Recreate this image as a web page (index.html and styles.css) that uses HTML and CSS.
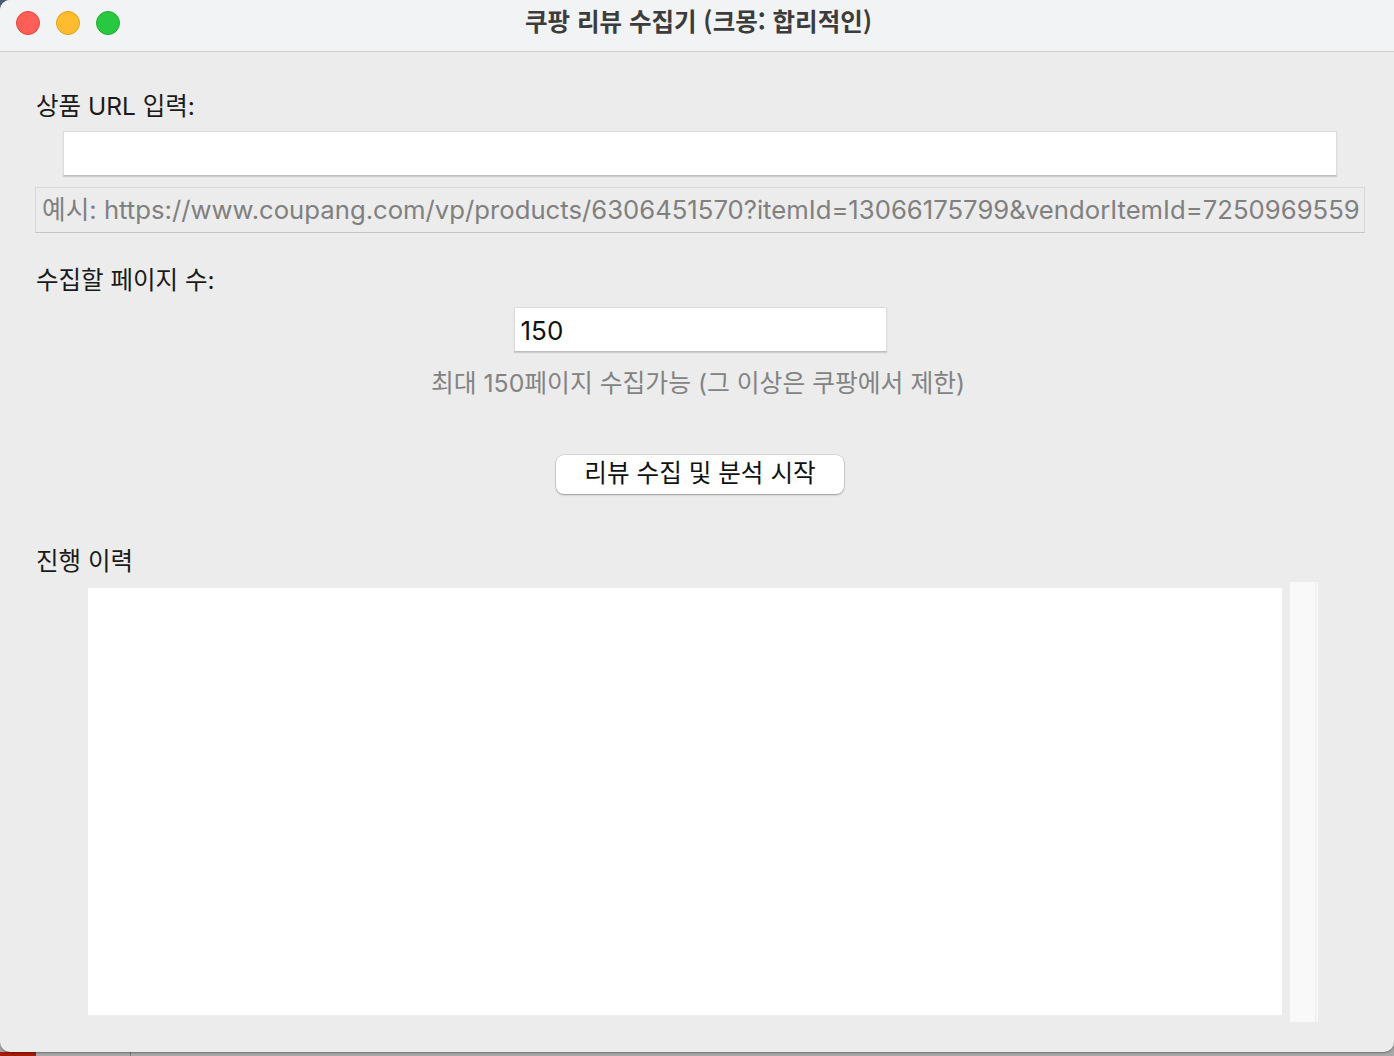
FILE: index.html
```html
<!DOCTYPE html>
<html lang="ko">
<head>
<meta charset="utf-8">
<title>쿠팡 리뷰 수집기</title>
<link rel="stylesheet" href="styles.css">
</head>
<body>
<div class="window">
  <div class="titlebar">
    <div class="lights">
      <span class="light red"></span>
      <span class="light yellow"></span>
      <span class="light green"></span>
    </div>
    <div class="title">쿠팡 리뷰 수집기 (크몽: 합리적인)</div>
  </div>
  <div class="content">
    <div class="label">상품 URL 입력:</div>
    <div class="url-input"></div>
    <div class="example">예시: https://www.coupang.com/vp/products/6306451570?itemId=13066175799&amp;vendorItemId=7250969559</div>
    <div class="label label-pages">수집할 페이지 수:</div>
    <div class="center-row"><div class="pages-input">150</div></div>
    <div class="hint">최대 150페이지 수집가능 (그 이상은 쿠팡에서 제한)</div>
    <div class="center-row"><div class="button">리뷰 수집 및 분석 시작</div></div>
    <div class="label label-log">진행 이력</div>
    <div class="log-row">
      <div class="log"></div>
      <div class="scrollbar"></div>
      <div class="scroll-edge"></div>
    </div>
  </div>
</div>
<div class="desktop-strip">
  <span class="strip-red"></span>
  <span class="strip-gray"></span>
  <span class="strip-rest"></span>
</div>
</body>
</html>
```

FILE: styles.css
```css
html, body {
  margin: 0;
  padding: 0;
}
body {
  width: 1394px;
  height: 1056px;
  overflow: hidden;
  background: linear-gradient(to bottom, #4d5c72 0, #4d5c72 30px, #a6a6a6 30px);
  font-family: "Inter", "Noto Sans CJK KR", sans-serif;
}
.window {
  height: 1052px;
  background: #ececec;
  border-radius: 10px 0 10px 10px;
  overflow: hidden;
  display: flex;
  flex-direction: column;
  box-shadow: 0 1px 2px rgba(0,0,0,0.35);
  position: relative;
  z-index: 1;
}
.titlebar {
  height: 52px;
  flex: none;
  background: #f2f3f5;
  border-bottom: 1px solid #cbcbcb;
  box-sizing: border-box;
  display: flex;
  align-items: center;
  position: relative;
}
.lights {
  display: flex;
  gap: 16px;
  padding-left: 16px;
  padding-bottom: 6px;
}
.light {
  width: 24px;
  height: 24px;
  border-radius: 50%;
  box-sizing: border-box;
}
.red { background: #ff5f57; border: 1px solid #e2463f; }
.yellow { background: #febc2e; border: 1px solid #e1a116; }
.green { background: #28c840; border: 1px solid #1dad2b; }
.title {
  flex: 1;
  text-align: center;
  font-weight: 700;
  font-size: 24.5px;
  line-height: 30px;
  color: #3c3c3c;
  margin-left: -117px;
  padding-bottom: 10px;
  font-family: "Noto Sans CJK KR", sans-serif;
}
.content {
  flex: 1;
  display: flex;
  flex-direction: column;
  padding: 0 29px 0 35px;
}
.label {
  font-size: 24.5px;
  color: #1a1a1a;
  line-height: 30px;
  margin-top: 39px;
  padding-left: 1px;
  font-family: "Inter", "Noto Sans CJK KR", sans-serif;
}
.url-input {
  margin: 10px 28px 0 28px;
  height: 45px;
  background: #fff;
  border: 1px solid #dcdcdc;
  border-bottom-color: #bdbdbd;
  box-sizing: border-box;
  box-shadow: 0 1px 1px rgba(0,0,0,0.12);
}
.example {
  margin-top: 11px;
  height: 46px;
  box-sizing: border-box;
  border: 1px solid #d9d9d9;
  border-bottom-color: #c4c4c4;
  background: #ececec;
  color: #808080;
  font-size: 25.7px;
  line-height: 44px;
  padding-left: 6px;
  white-space: nowrap;
  overflow: hidden;
}
.label-pages {
  margin-top: 32px;
}
.center-row {
  display: flex;
  justify-content: center;
}
.pages-input {
  margin-top: 12px;
  width: 373px;
  height: 45px;
  box-sizing: border-box;
  background: #fff;
  border: 1px solid #dcdcdc;
  border-bottom-color: #bdbdbd;
  box-shadow: 0 1px 1px rgba(0,0,0,0.12);
  font-size: 26px;
  line-height: 46px;
  padding-left: 6px;
  color: #111;
}
.hint {
  text-align: center;
  margin-top: 16px;
  font-size: 24.8px;
  line-height: 30px;
  color: #838383;
  padding-right: 4px;
}
.button {
  margin-top: 57px;
  width: 288px;
  height: 39px;
  box-sizing: border-box;
  background: #fff;
  border-radius: 8px;
  box-shadow: 0 0 0 0.5px rgba(0,0,0,0.15), 0 1px 2px rgba(0,0,0,0.3);
  text-align: center;
  font-size: 24.6px;
  line-height: 36px;
  color: #111;
}
.label-log {
  margin-top: 52px;
}
.log-row {
  display: flex;
  margin-top: 6px;
  height: 440px;
}
.log {
  margin-left: 53px;
  margin-top: 6px;
  width: 1194px;
  height: 427px;
  background: #fff;
}
.scrollbar {
  margin-left: 7px;
  width: 26px;
  height: 440px;
  background: #f9f9f9;
  border-left: 1px solid #ececec;
  box-sizing: border-box;
}
.scroll-edge {
  margin-left: 1px;
  width: 2px;
  height: 440px;
  background: #f7f7f7;
}
.desktop-strip {
  display: flex;
  height: 4px;
}
.strip-red {
  width: 36px;
  background: #a51a0b;
}
.strip-gray {
  width: 94px;
  background: #a9a9a9;
  border-right: 1px solid #7d7d7d;
}
.strip-rest {
  flex: 1;
  background: #a9a9a9;
}
```
